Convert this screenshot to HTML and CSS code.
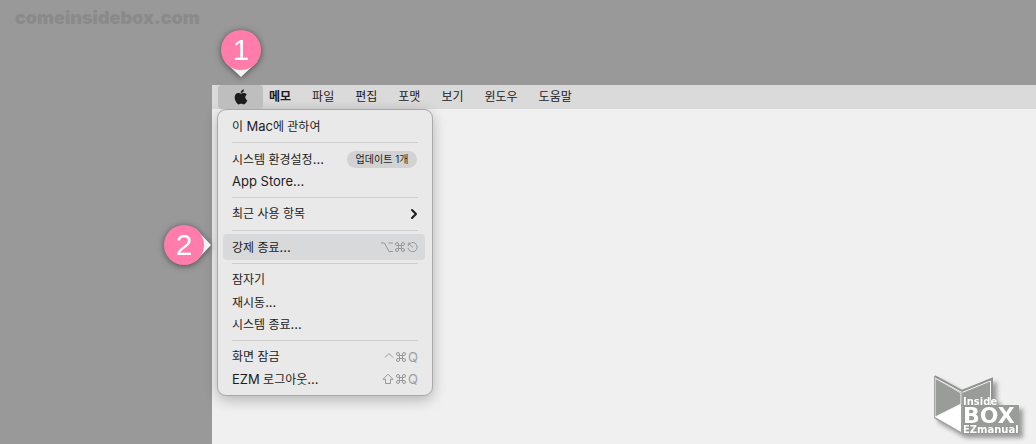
FILE: index.html
```
<!DOCTYPE html>
<html lang="ko">
<head>
<meta charset="utf-8">
<title>강제 종료</title>
<link rel="stylesheet" href="styles.css">
</head>
<body>
<div class="desktop">
  <header class="watermark">comeinsidebox.com</header>
  <main class="window">
    <nav class="menubar" aria-label="메뉴 막대">
      <button class="apple" type="button" aria-label="Apple 메뉴">
        <svg width="14" height="16" viewBox="0 0 14 16" fill="#1c1c1c"><path d="M9.900 .3c.1 1.100-.3 2-.9 2.700-.6.7-1.400 1.100-2.200 1C6.700 3 7.100 2.100 7.700 1.500 8.300.8 9.200.4 9.900.3zM12.900 5.600c-1 .6-1.600 1.500-1.600 2.700 0 1.400.8 2.400 2 2.900-.3.9-.7 1.700-1.200 2.400-.7 1-1.300 1.800-2.300 1.800-.9 0-1.300-.6-2.500-.6s-1.600.6-2.500.6c-1 0-1.700-.9-2.400-1.900C.4 10.700.1 7.200 1.600 5.500c.7-.9 1.700-1.400 2.700-1.400 1.100 0 1.900.7 2.800.7.800 0 1.600-.7 2.900-.7 1.100 0 2.200.6 2.900 1.500z"/></svg>
      </button>
      <button class="title bold" type="button">메모</button>
      <button class="title" type="button">파일</button>
      <button class="title" type="button">편집</button>
      <button class="title" type="button">포맷</button>
      <button class="title" type="button">보기</button>
      <button class="title" type="button">윈도우</button>
      <button class="title" type="button">도움말</button>
    </nav>
    <div class="menu">
      <button class="item" type="button"><span>이 <span class="latin">Mac</span>에 관하여</span></button>
      <hr>
      <button class="item" type="button"><span>시스템 환경설정<span class="latin">...</span></span><span class="badge">업데이트 1개</span></button>
      <button class="item" type="button"><span class="latin">App Store...</span></button>
      <hr>
      <button class="item" type="button"><span>최근 사용 항목</span>
        <svg width="8" height="12" viewBox="0 0 8 12" fill="none" stroke="#1c1c1c" stroke-width="2" stroke-linecap="round" stroke-linejoin="round"><path d="M2 2l4 4-4 4"/></svg>
      </button>
      <hr>
      <button class="item active" type="button"><span>강제 종료<span class="latin">...</span></span>
        <span class="keys">
          <svg width="12" height="12" viewBox="0 0 12 12"><path d="M0 2h3.500l4.500 8.500h4M7.500 2H12"/></svg>
          <svg width="12" height="12" viewBox="0 0 12 12"><use href="#cmd"/></svg>
          <svg width="11" height="12" viewBox="0 0 11 12"><path d="M4.500 1.600A4.600 4.600 0 1 1 1 7M6 6.500L1.500 2.500M1.300 5.200V2.200h3"/></svg>
        </span>
      </button>
      <hr>
      <button class="item" type="button">잠자기</button>
      <button class="item" type="button"><span>재시동<span class="latin">...</span></span></button>
      <button class="item" type="button"><span>시스템 종료<span class="latin">...</span></span></button>
      <hr>
      <button class="item" type="button"><span>화면 잠금</span>
        <span class="keys">
          <svg width="10" height="12" viewBox="0 0 10 12"><path d="M1 6.500L5 2.500l4 4"/></svg>
          <svg width="12" height="12" viewBox="0 0 12 12"><path id="cmd" d="M4.500 4.500h3v3h-3zM4.500 4.500H3A1.500 1.500 0 1 1 4.500 3zM7.500 4.500V3A1.500 1.500 0 1 1 9 4.500zM7.500 7.500H9A1.500 1.500 0 1 1 7.500 9zM4.500 7.500V9A1.500 1.500 0 1 1 3 7.500z"/></svg>
          <span class="latin">Q</span>
        </span>
      </button>
      <button class="item" type="button"><span><span class="latin">EZM</span> 로그아웃<span class="latin">...</span></span>
        <span class="keys">
          <svg width="12" height="12" viewBox="0 0 12 12"><path d="M6 1.200L1 6.300h2.500v4.200h5V6.300H11z"/></svg>
          <svg width="12" height="12" viewBox="0 0 12 12"><use href="#cmd"/></svg>
          <span class="latin">Q</span>
        </span>
      </button>
    </div>
  </main>
  <div class="marker first"><span>1</span></div>
  <div class="marker second"><span>2</span></div>
  <svg class="logo" width="106" height="74" viewBox="0 0 106 74" role="img" aria-label="Inside BOX EZmanual">
    <path d="M4 6l28 15 30-12v26H89v29H32L4 48z" fill="#999c99"/>
    <path d="M5 47l26-13v28z" fill="#fff"/>
    <path d="M5 8l26 15v11L5 47z" fill="#999c99" stroke="#f8f8f8" stroke-width="1"/>
    <path d="M4.500 6.500L32 21.500 61.500 9.500v25" fill="none" stroke="#8f928f" stroke-width="3"/>
    <path d="M5 8l27 14.500L60.500 11v24" fill="none" stroke="#f8f8f8" stroke-width="1"/>
    <path d="M4.500 6v42L32 63.500V22" fill="none" stroke="#a5a7a5" stroke-width="1"/>
    <g class="logo-text">
      <text x="33" y="35" class="logo-small">Inside</text>
      <text x="33" y="53" class="logo-big">BOX</text>
      <text x="33" y="63" class="logo-small">EZmanual</text>
    </g>
  </svg>
</div>
</body>
</html>
```
FILE: styles.css
```
* { box-sizing: border-box; }
body {
  margin: 0;
  background: #999;
  color: #1c1c1c;
  font: 12px/22px Inter, "Noto Sans CJK KR", sans-serif;
}
button {
  border: 0;
  margin: 0;
  padding: 0;
  background: none;
  color: inherit;
  font: inherit;
}
.desktop {
  position: relative;
  display: flex;
  flex-direction: column;
  min-height: 100vh;
  overflow: hidden;
}
.watermark {
  height: 85px;
  padding: 6px 15px;
  color: #8a8a8a;
  font-size: 18px;
  line-height: 24px;
  font-weight: 900;
}
.window {
  flex: 1;
  margin-left: 212px;
  padding-bottom: 48px;
  background: #f0f0f0;
}
.menubar {
  display: flex;
  height: 24px;
  padding-left: 6px;
  background: #dadada;
  align-items: stretch;
}
.apple {
  display: flex;
  width: 45px;
  margin-right: 6px;
  align-items: center;
  justify-content: center;
  background: #bebebe;
  border-radius: 4px;
}
.title { margin-right: 21px; }
.bold { font-weight: 700; }
.menu {
  width: 216px;
  margin: 0 5px;
  padding: 5px;
  border: 1px solid #a8a8a8;
  border-radius: 9px;
  background: #e9e9e9;
  box-shadow: 0 4px 14px rgba(0, 0, 0, .25);
}
.menu hr {
  height: 1px;
  margin: 5px 9px;
  border: 0;
  background: #cfcfcf;
}
.item {
  display: flex;
  width: 100%;
  height: 22px;
  padding: 0 9px;
  align-items: center;
  justify-content: space-between;
  text-align: left;
}
.active {
  width: calc(100% - 2px);
  height: 26px;
  margin: -2px 0;
  padding-right: 7px;
  background: #d8d9db;
  border-radius: 4px;
}
.latin { font-size: 13px; }
.badge {
  width: 70px;
  margin-right: 1px;
  border-radius: 9px;
  background: #d2d2d2;
  font-size: 10px;
  line-height: 17px;
  text-align: center;
}
.keys {
  display: flex;
  gap: 1px;
  align-items: center;
  color: #a0a0a0;
}
.keys svg {
  fill: none;
  stroke: #989898;
  stroke-width: 1;
}
.marker {
  position: absolute;
  width: 40px;
  height: 40px;
  color: #fff;
  font: 30px/40px "Liberation Sans", Arial, sans-serif;
  text-align: center;
  filter: drop-shadow(0 1px 3px rgba(0, 0, 0, .5));
}
.marker::before {
  content: "";
  position: absolute;
  background: #f4f4f4;
}
.marker span {
  position: relative;
  display: block;
  border-radius: 50%;
  background: #ff7cab;
}
.first { left: 221px; top: 30px; }
.second { left: 164px; top: 225px; }
.first::before {
  inset: 32px 4px -7px;
  clip-path: polygon(0 0, 100% 0, 50% 100%);
}
.second::before {
  inset: 4px -7px 4px 32px;
  clip-path: polygon(0 0, 100% 50%, 0 100%);
}
.logo {
  position: absolute;
  right: 0;
  bottom: 0;
  filter: drop-shadow(4px 4px 2px rgba(0, 0, 0, .35));
}
.logo-text {
  fill: #fff;
  stroke: #929592;
  stroke-width: 1px;
  paint-order: stroke;
  font-family: "DejaVu Sans", sans-serif;
  font-weight: 700;
}
.logo-small { font-size: 10px; }
.logo-big { font-size: 22px; }
```
